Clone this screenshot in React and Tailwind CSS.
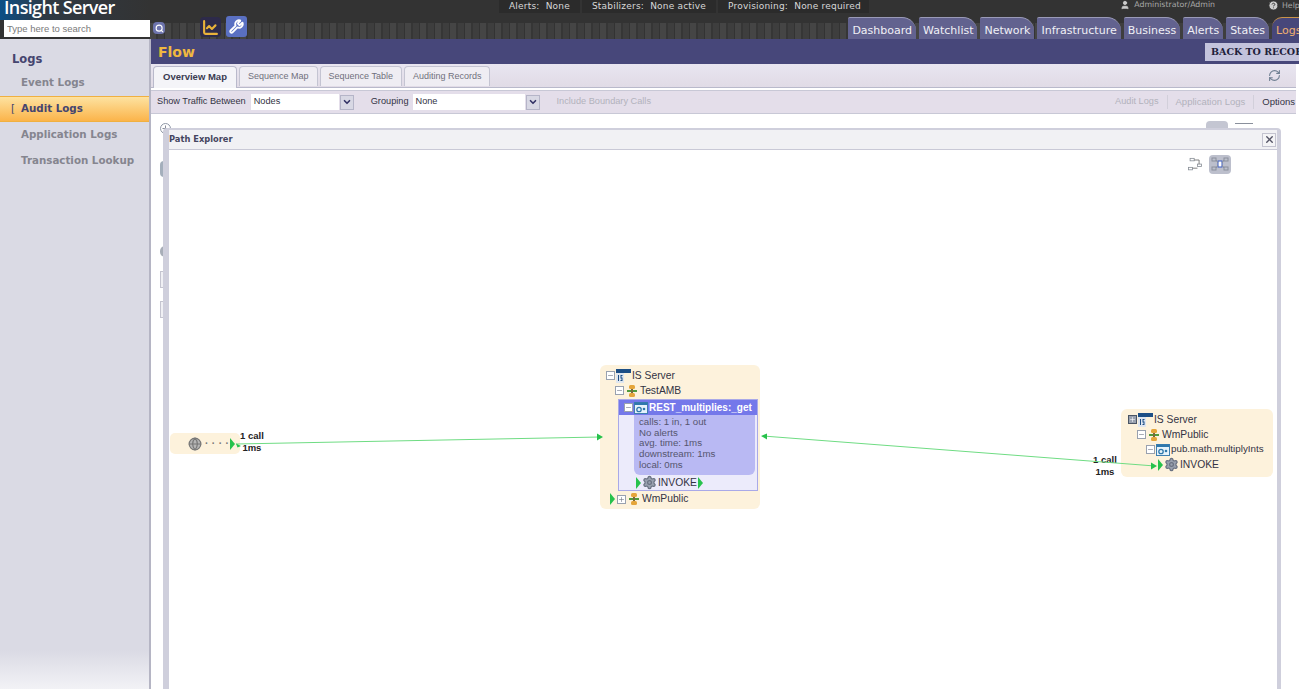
import { Globe, Settings, Search, LineChart, Wrench, User, HelpCircle, RefreshCw, X, Plus, Minus, ChevronDown } from 'lucide-react'

const TABS = ['Dashboard', 'Watchlist', 'Network', 'Infrastructure', 'Business', 'Alerts', 'States']
const SIDE = ['Event Logs', 'Audit Logs', 'Application Logs', 'Transaction Lookup']
const SUBTABS = ['Sequence Map', 'Sequence Table', 'Auditing Records']
const DEJAVU = "font-['DejaVu_Sans',sans-serif]"

function Box({ open = true, dark = false }) {
  const Icon = open ? Minus : Plus
  return (
    <span className={`flex h-[9px] w-[9px] shrink-0 items-center justify-center border ${dark ? 'border-gray-600 bg-gray-400' : 'border-gray-400 bg-white'}`}>
      <Icon size={7} strokeWidth={2} className={dark ? 'text-white' : 'text-gray-500'} />
    </span>
  )
}

function ServerIcon() {
  return (
    <svg width="15" height="15" viewBox="0 0 15 15" className="shrink-0">
      <rect x="0" y="1" width="15" height="4" fill="#1d4f86" />
      <rect x="0" y="5" width="8" height="10" fill="#dfe6f0" />
      <rect x="2" y="7" width="1" height="6" fill="#1d4f86" />
      <path d="M4.5 7h2v1h-1v1.500h1V13h-2v-1h1v-1.500h-1z" fill="#1d4f86" />
    </svg>
  )
}

function PackageIcon() {
  return (
    <svg width="12" height="14" viewBox="0 0 12 14" className="shrink-0">
      <rect x="3" y="1" width="6" height="4" rx="1.500" fill="#e5a53a" />
      <rect x="3" y="9" width="6" height="4" rx="1.500" fill="#e5a53a" />
      <rect x="1" y="6" width="10" height="2" fill="#4f9a3c" />
      <rect x="5" y="5" width="2" height="4" fill="#7a6a3a" />
    </svg>
  )
}

function ServiceIcon() {
  return (
    <svg width="14" height="12" viewBox="0 0 14 12" className="shrink-0">
      <rect x="0.500" y="0.500" width="13" height="11" fill="#e6f3fb" stroke="#3f7fb0" />
      <rect x="0.500" y="0.500" width="13" height="2.500" fill="#2f78ac" />
      <circle cx="5" cy="7.500" r="2.200" fill="none" stroke="#2f78ac" strokeWidth="1.300" />
      <circle cx="10" cy="7" r="1.300" fill="#2f78ac" />
    </svg>
  )
}

function Pin() {
  return (
    <svg width="5" height="12" viewBox="0 0 5 12" className="shrink-0">
      <path d="M0 0l5 6-5 6z" fill="#27c24c" />
    </svg>
  )
}

function Gear() {
  return <Settings size={15} className="shrink-0 fill-gray-400 text-gray-500" />
}

function MapToggle({ active }) {
  return (
    <svg width={active ? 22 : 18} height="19" viewBox="0 0 22 19" className={`rounded-sm ${active ? 'bg-[#bcbfcc]' : ''}`}>
      {active ? (
        <g fill="none" stroke="#8a909c">
          <rect x="3" y="3" width="4" height="3" />
          <rect x="3" y="12" width="4" height="3" />
          <rect x="15" y="3" width="4" height="3" />
          <rect x="15" y="12" width="4" height="3" />
          <rect x="9" y="6" width="4" height="6" stroke="#3c5cc0" fill="#fff" />
          <path d="M7 5l2 3M7 13l2-3M15 5l-2 3M15 13l-2-3" />
        </g>
      ) : (
        <g fill="none" stroke="#8a9098">
          <rect x="5" y="2" width="5" height="3" />
          <rect x="3" y="13" width="5" height="3" />
          <rect x="14" y="9" width="5" height="3" />
          <path d="M10 4h6v5M8 14h6" stroke="#666" />
        </g>
      )}
    </svg>
  )
}

export default function App() {
  return (
    <div className={`h-[689px] w-[1299px] overflow-hidden bg-white ${DEJAVU}`}>
      {/* top bars */}
      <div className="relative h-[39px] bg-[#333333]">
        <div className="flex h-[23px]">
          <div className="flex h-[20px] w-[150px] items-start bg-[linear-gradient(90deg,#0b4f86_0,#2f3a44_30%,#333333_100%)] pl-[4px]">
            <span className="font-['Open_Sans',sans-serif] text-[18px] leading-[15px] font-semibold tracking-[-0.650px] whitespace-nowrap text-white">Insight Server</span>
          </div>
          <div className="flex flex-1 items-start pl-[349px] text-[9px] leading-[13px] text-[#d8d8d8]">
            <span className="h-[13px] bg-[#2b2b2b] px-[10px] tracking-[0.200px]">Alerts:&nbsp; None</span>
            <span className="ml-[2px] h-[13px] bg-[#2b2b2b] px-[10px] tracking-[0.200px]">Stabilizers:&nbsp; None active</span>
            <span className="ml-[2px] h-[13px] bg-[#2b2b2b] pr-[8px] pl-[10px] tracking-[0.200px]">Provisioning:&nbsp; None required</span>
            <span className="mr-[53px] ml-auto flex items-center gap-[4px] pb-[3px] text-[7.800px] leading-[10px] text-[#a8a8a8]">
              <User size={10} className="fill-[#cccccc] text-[#cccccc]" />
              Administrator/Admin
            </span>
            <span className="mr-[-10px] flex w-[41px] shrink-0 items-center gap-[3px] overflow-hidden pb-[3px] text-[7.800px] leading-[10px] text-[#a8a8a8]">
              <HelpCircle size={11} className="shrink-0 fill-[#cccccc] text-[#333333]" />
              Help
            </span>
          </div>
        </div>
        <div className="flex h-[16px] bg-[repeating-linear-gradient(90deg,#454545_0,#454545_6px,#363636_6px,#363636_8px,#3e3e3e_8px,#3e3e3e_14px,#333333_14px,#333333_15px)]">
          <div className="flex h-[16px] w-[150px] items-start bg-[#333333] pl-[4px]">
            <input
              readOnly
              value="Type here to search"
              className="mt-[-3px] h-[17px] w-[146px] bg-white px-[3px] font-['Liberation_Sans',sans-serif] text-[9.500px] text-[#7a7a7a] outline-none"
            />
          </div>
          <div className="flex h-[16px] items-start">
            <span className="mt-[-1px] ml-[3px] flex h-[12px] w-[12px] items-center justify-center rounded-sm bg-[#6d74ad]">
              <Search size={9} strokeWidth={3} className="text-white" />
            </span>
            <span className="mt-[-6px] ml-[35px] flex h-[20px] w-[21px] items-center justify-center rounded-sm bg-[#2d2a4a]">
              <LineChart size={17} strokeWidth={3} className="text-[#e8b23a]" />
            </span>
            <span className="mt-[-7px] ml-[5px] flex h-[21px] w-[21px] items-center justify-center rounded-[3px] bg-[#5a70c2]">
              <Wrench size={15} strokeWidth={3} className="text-white" />
            </span>
          </div>
          <div className="mt-[-7px] ml-auto flex h-[23px] items-end gap-[3px]">
            {TABS.map((t) => (
              <span key={t} className="flex h-[22px] items-center rounded-tl-[2px] rounded-tr-[14px] border-t border-[#9a9ab8] bg-[#62628f] px-[4px] pt-[4px] text-[11px] leading-none text-[#f0f0f6]">
                {t}
              </span>
            ))}
            <span className="flex h-[22px] w-[27px] items-center overflow-hidden rounded-tl-[10px] border-t border-[#c9944a] bg-[#47477a] pt-[4px] pl-[4px] text-[11px] leading-none text-[#f0b070]">
              Logs
            </span>
          </div>
        </div>
      </div>

      <div className="flex h-[650px]">
        {/* sidebar */}
        <div className="flex w-[151px] shrink-0 flex-col border-r-2 border-[#b5b5c4] bg-[linear-gradient(180deg,#dadae4_0,#dadae4_94%,#f2f2f6_100%)] pt-[13px]">
          <div className="pl-[12px] text-[11.500px] leading-[14px] font-bold text-[#45456f]">Logs</div>
          <div className="mt-[4px] flex flex-col">
            {SIDE.map((s, i) => (
              <div
                key={s}
                className={`flex h-[26px] items-center text-[10.300px] font-bold ${
                  i === 1
                    ? 'border-y border-[#f0b040] bg-[linear-gradient(180deg,#fde2a0,#fbb44a)] text-[#45456f]'
                    : 'text-[#85858f]'
                }`}
              >
                {i === 1 && <span className="absolute ml-[11px] font-normal">[</span>}
                <span className="ml-[21px] whitespace-nowrap">{s}</span>
              </div>
            ))}
          </div>
        </div>

        {/* main */}
        <div className="flex min-w-0 flex-1 flex-col">
          <div className="flex h-[25px] w-[1148px] items-start justify-between bg-[#47477a] pl-[7px]">
            <span className="text-[14px] leading-[26px] font-bold text-[#f0b840]">Flow</span>
            <span className="mt-[4px] h-[18px] w-[94px] overflow-hidden bg-[#c3c3dc] pl-[6px] font-['DejaVu_Serif',serif] text-[9.500px] leading-[18px] font-bold whitespace-nowrap text-[#20203a]">BACK TO RECORDS</span>
          </div>
          <div className="flex h-[24px] w-[1145px] items-end border-b border-[#b9b9cb] bg-[linear-gradient(180deg,#e8e5f0,#e1dbe6)] pl-[2px] font-['Liberation_Sans',sans-serif] text-[9px]">
            <span className="mb-[-1px] flex h-[22px] w-[84px] items-center justify-center rounded-t-sm border border-b-0 border-[#b9b9cb] bg-[#f4f4f8] text-[9.500px] font-bold text-[#3a3a50]">Overview Map</span>
            {SUBTABS.map((t) => (
              <span key={t} className="mb-[1px] ml-[2px] flex h-[20px] items-center rounded-t-sm border border-b-0 border-[#c4c4d2] bg-[#efedf3] px-[8px] text-[#70707c]">{t}</span>
            ))}
            <RefreshCw size={13} className="mr-[15px] mb-[5px] ml-auto text-[#6f7f92]" />
          </div>
          <div className="mt-[2px] flex h-[24px] w-[1145px] items-center border-y border-[#c8c8d6] bg-[#e4deea] pl-[6px] font-['Liberation_Sans',sans-serif] text-[9.200px] text-[#333344]">
            <span className="whitespace-nowrap">Show Traffic Between</span>
            <span className="ml-[5px] flex h-[16px] w-[103px] shrink-0 items-center justify-between">
              <span className="flex h-[16px] w-[88px] items-center bg-white pl-[3px]">Nodes</span>
              <span className="flex h-[15px] w-[14px] items-center justify-center border border-[#b5b5c8] bg-[#d8d8e4]">
                <ChevronDown size={10} strokeWidth={4} className="text-[#333366]" />
              </span>
            </span>
            <span className="ml-[17px]">Grouping</span>
            <span className="ml-[4px] flex h-[16px] w-[127px] shrink-0 items-center justify-between">
              <span className="flex h-[16px] w-[112px] items-center bg-white pl-[3px]">None</span>
              <span className="flex h-[15px] w-[14px] items-center justify-center border border-[#b5b5c8] bg-[#d8d8e4]">
                <ChevronDown size={10} strokeWidth={4} className="text-[#333366]" />
              </span>
            </span>
            <span className="ml-[17px] text-[#b2b2bc]">Include Boundary Calls</span>
            <span className="ml-auto border-r border-[#d2cfda] pr-[8px] text-[#b2b2bc]">Audit Logs</span>
            <span className="ml-[8px] border-r border-[#d2cfda] pr-[8px] text-[9.500px] text-[#b2b2bc]">Application Logs</span>
            <span className="ml-[8px] pr-[1px] text-[9.500px]">Options</span>
          </div>

          {/* flow canvas behind the dialog */}
          <div className="relative w-[1145px] flex-1 bg-white">
            <div className="absolute top-[9px] left-[9px] flex h-[11px] w-[11px] items-center justify-center rounded-full border border-[#8f97a6] bg-white">
              <Plus size={9} className="text-[#606878]" />
            </div>
            <div className="absolute top-[47px] left-[9px] h-[16px] w-[5px] rounded-l-sm bg-[#a4afbc]" />
            <div className="absolute top-[132px] left-[9px] h-[11px] w-[5px] rounded-l-full bg-[#a8aeb8]" />
            <div className="absolute top-[157px] left-[9px] h-[17px] w-[5px] border border-[#c5c5d0] bg-[#f0f0f4]" />
            <div className="absolute top-[187px] left-[9px] h-[17px] w-[5px] border border-[#c5c5d0] bg-[#f0f0f4]" />
            <div className="absolute top-[7px] right-[68px] h-[10px] w-[22px] rounded-t-sm bg-[#c4c6d2]" />
            <div className="absolute top-[9px] right-[43px] h-[5px] w-[18px] border-t border-[#8a909c]" />

            {/* Path Explorer window */}
            <div className="absolute top-[14px] left-[12px] flex h-[600px] w-[1118px] flex-col rounded-t-[4px] border-t-2 border-r-[4px] border-l-[6px] border-[#cfcfdc] bg-[#f1f1f4]">
              <div className="flex h-[20px] shrink-0 items-center justify-between border-b border-[#c9c9d6] pr-[1px]">
                <span className="text-[8.300px] font-bold text-[#45455f]">Path Explorer</span>
                <span className="flex h-[14px] w-[14px] items-center justify-center border border-[#c4c4d0] bg-[#f4f4f6]">
                  <X size={11} strokeWidth={3} className="text-[#555566]" />
                </span>
              </div>
              <div className="relative flex-1 bg-white font-['Liberation_Sans',sans-serif]">
                <div className="absolute top-[5px] right-[46px] flex gap-[5px]">
                  <MapToggle />
                  <MapToggle active />
                </div>

                {/* caller node */}
                <div className="absolute top-[283px] left-[1px] flex h-[21px] w-[70px] items-center rounded-[5px] bg-[#fdf2dc] pl-[18px]">
                  <Globe size={14} className="shrink-0 fill-[#b5b5b5] text-[#777777]" />
                  <span className="ml-[3px] text-[10px] leading-none font-bold tracking-[3.500px] text-[#777777]">····</span>
                  <span className="absolute left-[60px]"><Pin /></span>
                </div>
                <div className="absolute top-[280px] left-[71px] text-center text-[9.500px] leading-[12px] font-bold text-[#222222]">1 call<br />1ms</div>

                {/* selected server */}
                <div className="absolute top-[215px] left-[431px] flex h-[144px] w-[160px] flex-col rounded-[6px] bg-[#fdf2dc] pt-[3px] text-[10px] text-[#333344]">
                  <div className="flex h-[15px] items-center gap-[1px] pl-[6px] text-[10.300px]">
                    <Box />
                    <ServerIcon />
                    <span>IS Server</span>
                  </div>
                  <div className="flex h-[15px] items-center gap-[2px] pl-[15px] text-[10.300px]">
                    <Box />
                    <PackageIcon />
                    <span>TestAMB</span>
                  </div>
                  <div className="mt-[1px] ml-[18px] flex h-[92px] w-[140px] flex-col border border-[#a9a9e8] bg-[#ecebfb]">
                    <div className="flex h-[15px] shrink-0 items-center gap-[1px] bg-[#7478ea] pl-[5px] text-[10px] font-bold text-white">
                      <Box />
                      <ServiceIcon />
                      <span className="whitespace-nowrap">REST_multiplies:_get</span>
                    </div>
                    <div className="ml-[15px] h-[61px] w-[121px] rounded-b-[6px] bg-[#b9b9f3] pt-[2px] pl-[5px] text-[9.700px] leading-[10.700px] text-[#55556e]">
                      calls: 1 in, 1 out<br />No alerts<br />avg. time: 1ms<br />downstream: 1ms<br />local: 0ms
                    </div>
                    <div className="flex h-[15px] items-center gap-[1px] pl-[17px] text-[10.300px]">
                      <Pin />
                      <Gear />
                      <span>INVOKE</span>
                      <Pin />
                    </div>
                  </div>
                  <div className="flex h-[16px] items-center gap-[2px] pl-[10px] text-[10.300px]">
                    <Pin />
                    <Box open={false} />
                    <PackageIcon />
                    <span>WmPublic</span>
                  </div>
                </div>

                {/* target server */}
                <div className="absolute top-[259px] left-[952px] flex h-[68px] w-[152px] flex-col rounded-[6px] bg-[#fdf2dc] pt-[3px] text-[9.800px] text-[#333344]">
                  <div className="flex h-[15px] items-center gap-[1px] pl-[7px] text-[10.300px]">
                    <Box open={false} dark />
                    <ServerIcon />
                    <span>IS Server</span>
                  </div>
                  <div className="flex h-[15px] items-center gap-[2px] pl-[16px] text-[10.300px]">
                    <Box />
                    <PackageIcon />
                    <span>WmPublic</span>
                  </div>
                  <div className="flex h-[15px] items-center gap-[1px] pl-[25px]">
                    <Box />
                    <ServiceIcon />
                    <span className="whitespace-nowrap">pub.math.multiplyInts</span>
                  </div>
                  <div className="flex h-[15px] items-center gap-[1px] pl-[37px] text-[10.300px]">
                    <Pin />
                    <Gear />
                    <span>INVOKE</span>
                  </div>
                </div>
                <div className="absolute top-[304px] left-[924px] text-center text-[9.500px] leading-[12px] font-bold text-[#222222]">1 call<br />1ms</div>

                {/* edges */}
                <svg className="absolute top-0 left-0" width="1108" height="450" viewBox="169 150 1108 450">
                  <path d="M236 444L600 437" stroke="#6fdc83" strokeWidth="1" fill="none" />
                  <path d="M603 437l-6-3.500v7z" fill="#27c24c" />
                  <path d="M241 446l-5-2.500l1.500 4z" fill="#27c24c" />
                  <path d="M763 436L1155 466" stroke="#6fdc83" strokeWidth="1" fill="none" />
                  <path d="M761 436l6-2.500v6z" fill="#27c24c" />
                  <path d="M1157 466l-6-3.500v7z" fill="#27c24c" />
                </svg>
              </div>
            </div>
          </div>
        </div>
      </div>
    </div>
  )
}
